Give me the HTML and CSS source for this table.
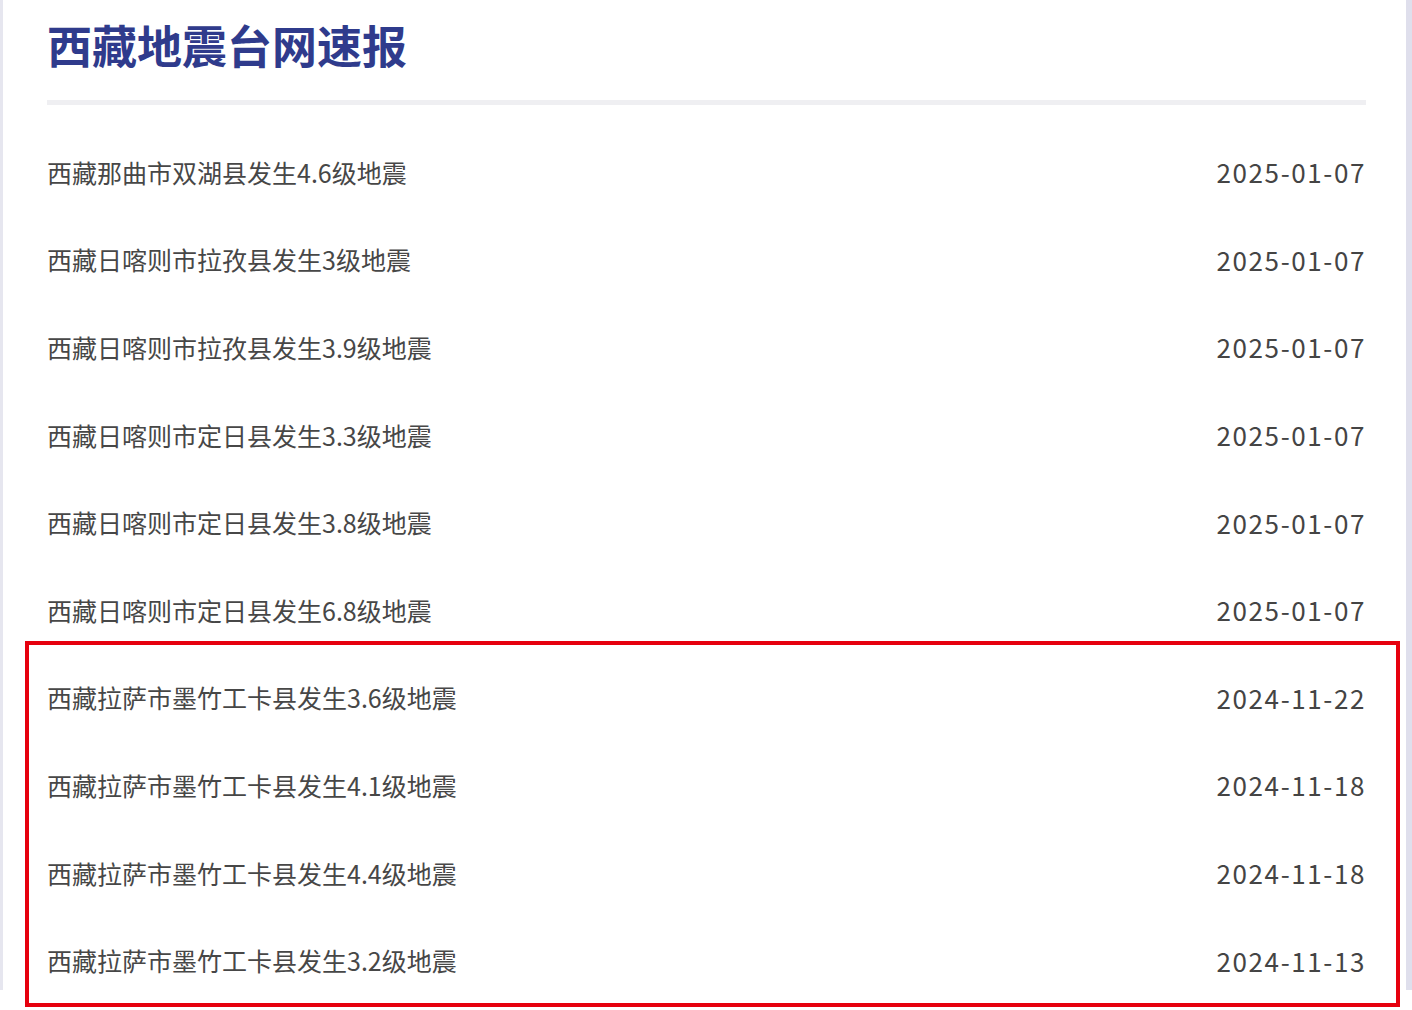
FILE: index.html
```html
<!DOCTYPE html>
<html lang="zh-CN">

<head>
    <meta charset="UTF-8">
    <meta name="viewport" content="width=device-width, initial-scale=1.0">
    <title>西藏地震台网速报</title>

    <link rel="stylesheet" href="styles.css">
</head>

<body>
    <div class="page">
        <h1 class="title">西藏地震台网速报</h1>
        <div class="divider"></div>

        <ul class="news">
            <li class="row"><span class="name">西藏那曲市双湖县发生4.6级地震</span><span class="date">2025-01-07</span></li>
            <li class="row"><span class="name">西藏日喀则市拉孜县发生3级地震</span><span class="date">2025-01-07</span></li>
            <li class="row"><span class="name">西藏日喀则市拉孜县发生3.9级地震</span><span class="date">2025-01-07</span></li>
            <li class="row"><span class="name">西藏日喀则市定日县发生3.3级地震</span><span class="date">2025-01-07</span></li>
            <li class="row"><span class="name">西藏日喀则市定日县发生3.8级地震</span><span class="date">2025-01-07</span></li>
            <li class="row"><span class="name">西藏日喀则市定日县发生6.8级地震</span><span class="date">2025-01-07</span></li>
            <li class="row"><span class="name">西藏拉萨市墨竹工卡县发生3.6级地震</span><span class="date">2024-11-22</span></li>
            <li class="row"><span class="name">西藏拉萨市墨竹工卡县发生4.1级地震</span><span class="date">2024-11-18</span></li>
            <li class="row"><span class="name">西藏拉萨市墨竹工卡县发生4.4级地震</span><span class="date">2024-11-18</span></li>
            <li class="row"><span class="name">西藏拉萨市墨竹工卡县发生3.2级地震</span><span class="date">2024-11-13</span></li>
        </ul>
    </div>

    <!-- 標註框 -->
    <div class="mark"></div>
</body>

</html>
```

FILE: styles.css
```css
body {
    margin: 0;
    background-color: #fff;
    font-family: "Noto Sans CJK SC", "Noto Sans", sans-serif;
}

.page {
    width: 1412px;
    height: 990px;
    box-sizing: border-box;
    padding: 18px 40px 0 44px;
    border-left: 3px solid #e6e6ef;
    border-right: 6px solid #dfdfec;
    background-color: #fff;
}

.title {
    margin: 0;
    font-size: 45px;
    line-height: 54px;
    font-weight: 700;
    color: #2f3b8c;
}

.divider {
    height: 5px;
    margin-top: 28px;
    background-color: #efeff2;
}

.news {
    list-style: none;
    margin: 23px 0 0;
    padding: 0;
}

.row {
    height: 87.6px;
    display: flex;
    align-items: center;
    justify-content: space-between;
}

.name {
    font-size: 25px;
    color: #474747;
}

.date {
    font-size: 26px;
    letter-spacing: 1.6px;
    color: #444;
    margin-right: 0;
}

/* 紅色標註 */
.mark {
    position: absolute;
    left: 25px;
    top: 641px;
    width: 1367px;
    height: 358px;
    border: 4px solid #e6000e;
}
```
